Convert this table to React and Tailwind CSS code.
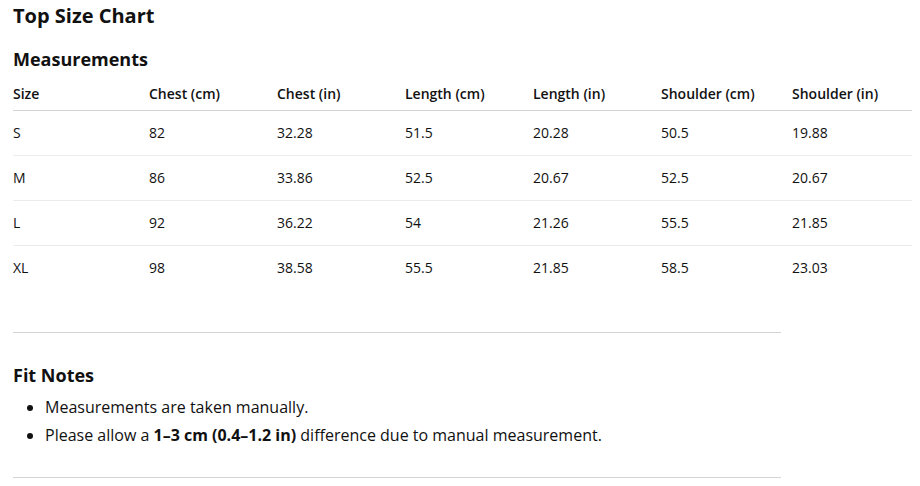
import React from 'react';

const columns = [
  { label: 'Size', width: 'w-[136px]' },
  { label: 'Chest (cm)', width: 'w-[128px]' },
  { label: 'Chest (in)', width: 'w-[128px]' },
  { label: 'Length (cm)', width: 'w-[128px]' },
  { label: 'Length (in)', width: 'w-[128px]' },
  { label: 'Shoulder (cm)', width: 'w-[131px]' },
  { label: 'Shoulder (in)', width: 'w-[120px]' },
];

const rows = [
  ['S', '82', '32.28', '51.5', '20.28', '50.5', '19.88'],
  ['M', '86', '33.86', '52.5', '20.67', '52.5', '20.67'],
  ['L', '92', '36.22', '54', '21.26', '55.5', '21.85'],
  ['XL', '98', '38.58', '55.5', '21.85', '58.5', '23.03'],
];

export default function App() {
  return (
    <div className="min-h-[486px] bg-white pl-[13px] text-[#111] font-['Open_Sans',sans-serif]">
      <h1 className="pt-[3px] text-[20px] leading-[26px] font-bold">Top Size Chart</h1>

      <h2 className="mt-[18px] text-[18px] leading-[24px] font-bold">Measurements</h2>

      <table className="mt-[11px] w-[899px] table-fixed border-collapse text-left text-[14px]">
        <thead>
          <tr className="border-b border-[#d4d4d4]">
            {columns.map(col => (
              <th key={col.label} className={`${col.width} pt-[2px] pb-[6px] leading-[20px] font-semibold`}>
                {col.label}
              </th>
            ))}
          </tr>
        </thead>
        <tbody>
          {rows.map((row, i) => (
            <tr key={row[0]} className={i < rows.length - 1 ? 'border-b border-[#ececec]' : ''}>
              {row.map((cell, j) => (
                <td key={j} className="py-3 leading-[20px]">{cell}</td>
              ))}
            </tr>
          ))}
        </tbody>
      </table>

      <hr className="mt-[42px] w-[768px] border-0 border-t border-[#d4d4d4]" />

      <h2 className="mt-[30px] text-[18px] leading-[24px] font-bold">Fit Notes</h2>
      <ul className="mt-[6px] list-disc pl-[32px] text-[16px] leading-[28px]">
        <li>Measurements are taken manually.</li>
        <li>
          Please allow a <strong className="font-bold">1–3 cm (0.4–1.2 in)</strong> difference due to manual measurement.
        </li>
      </ul>

      <hr className="mt-[28px] w-[768px] border-0 border-t border-[#d4d4d4]" />
    </div>
  );
}
